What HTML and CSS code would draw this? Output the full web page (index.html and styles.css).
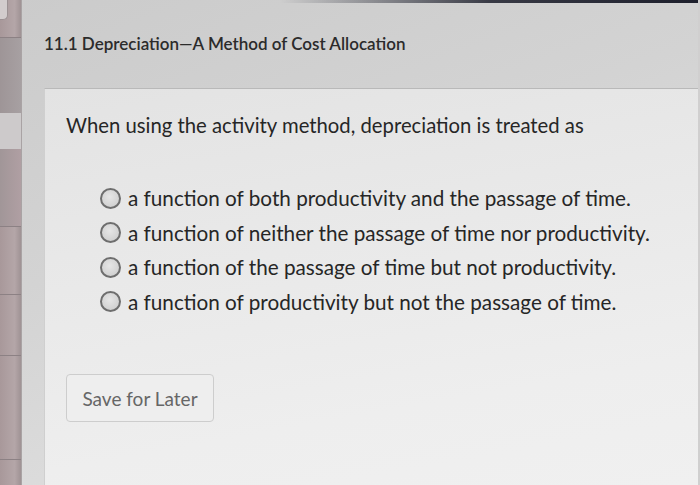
FILE: index.html
```html
<!DOCTYPE html>
<html lang="en">
<head>
<meta charset="utf-8">
<title>11.1 Depreciation</title>
<link rel="stylesheet" href="styles.css">
</head>
<body>
<div class="app">
  <aside class="sidebar">
    <div class="s-row s-a"><span class="s-tab"></span></div>
    <div class="s-row s-b"></div>
    <div class="s-row s-c"></div>
    <div class="s-row s-d"></div>
    <div class="s-row s-e"></div>
    <div class="s-row s-f"></div>
    <div class="s-row s-g"></div>
    <div class="s-row s-h"></div>
  </aside>
  <main class="main">
    <h1 class="title">11.1 Depreciation—A Method of Cost Allocation</h1>
    <section class="card">
      <p class="question">When using the activity method, depreciation is treated as</p>
      <ul class="options">
        <li class="option"><span class="radio"></span><span class="label">a function of both productivity and the passage of time.</span></li>
        <li class="option"><span class="radio"></span><span class="label">a function of neither the passage of time nor productivity.</span></li>
        <li class="option"><span class="radio"></span><span class="label">a function of the passage of time but not productivity.</span></li>
        <li class="option"><span class="radio"></span><span class="label">a function of productivity but not the passage of time.</span></li>
      </ul>
      <button class="save">Save for Later</button>
    </section>
  </main>
</div>
</body>
</html>
```

FILE: styles.css
```css
* { box-sizing: border-box; }
html, body { margin: 0; padding: 0; }
body {
  width: 700px;
  height: 485px;
  overflow: hidden;
  font-family: Lato, "Open Sans", "Liberation Sans", sans-serif;
  color: #2a2a2a;
  background:
    linear-gradient(to right, rgba(30,32,45,0) 40%, rgba(30,32,45,0.85) 70%, #1d1f2c 100%) top left / 100% 3px no-repeat,
    linear-gradient(160deg, #cbcbcb 0%, #d3d3d3 40%, #dcdcdc 70%, #e4e4e4 100%);
}
.app {
  display: flex;
  height: 485px;
}
.sidebar {
  width: 22px;
  flex: none;
  display: flex;
  flex-direction: column;
  background: linear-gradient(to right, #a8989a, #b4a6a8 70%, #9f9294);
  border-right: 1px solid #a9a3a4;
}
.s-row { border-bottom: 1px solid #8c8184; position: relative; }
.s-a { height: 38px; }
.s-tab {
  position: absolute; left: 0; top: 0;
  width: 8px; height: 20px;
  background: #d2cccd;
  border-radius: 0 0 5px 0;
  border-right: 1px solid #9b9193;
  border-bottom: 1px solid #9b9193;
}
.s-b { height: 75px; border-bottom: none; background: linear-gradient(to right, #9e9597, #a7a0a2); }
.s-c { height: 36px; background: #cdcacb; border-bottom: none; }
.s-d { height: 78px; background: linear-gradient(to right, #a19698, #b09fa3); }
.s-e { height: 68px; }
.s-f { height: 61px; }
.s-g { height: 104px; }
.s-h { flex: 1; border-bottom: none; }
.main {
  flex: 1;
  min-width: 0;
  padding-left: 22px;
  padding-top: 33px;
  display: flex;
  flex-direction: column;
  border-right: 2px solid #d0cfcf;
}
.title {
  margin: 0;
  font-size: 17px;
  line-height: 22px;
  font-weight: 600;
  color: #2b2b2b;
  letter-spacing: 0;
}
.card {
  margin-top: 33px;
  flex: 1;
  border-top: 1px solid #b9b9b9;
  border-left: 1px solid #cfcfcf;
  background: linear-gradient(170deg, #e3e3e3 0%, #e9e9e9 40%, #eeeeee 75%, #f0f0f0 100%);
  padding: 24px 0 0 21px;
  display: flex;
  flex-direction: column;
  align-items: flex-start;
}
.question {
  margin: 0;
  font-size: 20.3px;
  line-height: 24px;
  color: #262626;
}
.options {
  list-style: none;
  margin: 44px 0 0 0;
  padding: 0 0 0 34px;
}
.option {
  display: flex;
  align-items: center;
  height: 34.5px;
  font-size: 20.7px;
  color: #262626;
}
.radio {
  width: 21px;
  height: 21px;
  flex: none;
  border-radius: 50%;
  border: 2px solid #6e6e6e;
  background: radial-gradient(circle at 45% 40%, #e6e6e6, #c9c9c9);
  margin-right: 7px;
}
.save {
  margin-top: 55px;
  width: 148px;
  height: 48px;
  border: 1px solid #cdcdcd;
  border-radius: 4px;
  background: #eeeeee;
  font-family: Lato, "Open Sans", "Liberation Sans", sans-serif;
  font-size: 19px;
  color: #666666;
  padding: 0;
  text-align: center;
}
```
